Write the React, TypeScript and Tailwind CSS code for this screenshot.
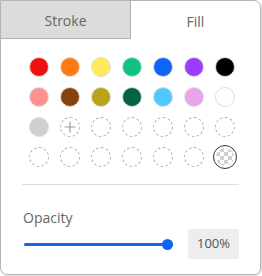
import React from 'react';

const row1 = ['#ee1111', '#ff7b0f', '#ffea5c', '#0fc27f', '#0f64f5', '#9b3cff', '#000000'];
const row2 = ['#ff9191', '#87420c', '#b9a318', '#036443', '#4fc7ff', '#e9a5ea', '#ffffff'];

function Swatch({ color }: { color: string }) {
  return (
    <div
      className="w-5 h-5 rounded-full border border-[#dedede]"
      style={{ backgroundColor: color }}
    />
  );
}

function Empty() {
  return <div className="w-5 h-5 rounded-full border border-dashed border-[#aaaaaa]" />;
}

function AddSwatch() {
  return (
    <div className="w-5 h-5 rounded-full border border-dashed border-[#aaaaaa] flex items-center justify-center">
      <svg width="12" height="12" viewBox="0 0 12 12">
        <path d="M6 0.5V11.5M0.5 6H11.5" stroke="#999" strokeWidth="1.2" />
      </svg>
    </div>
  );
}

function Transparent() {
  return (
    <div className="w-[24px] h-[24px] -m-[2px] rounded-full border border-[#333] p-[2px]">
      <div
        className="w-full h-full rounded-full"
        style={{
          backgroundColor: '#ffffff',
          backgroundImage:
            'linear-gradient(45deg,#d0d0d0 25%,transparent 25%,transparent 75%,#d0d0d0 75%),linear-gradient(45deg,#d0d0d0 25%,transparent 25%,transparent 75%,#d0d0d0 75%)',
          backgroundSize: '8px 8px',
          backgroundPosition: '0 0,4px 4px',
        }}
      />
    </div>
  );
}

export default function App() {
  return (
    <div className="w-[262px] h-[276px] bg-white font-['Open_Sans',sans-serif]">
      <div className="w-[261px] h-[275px] border border-[#b5b5b5] rounded-tr-[7px] rounded-b-[7px] shadow-[1px_1px_1px_rgba(0,0,0,0.15)] overflow-hidden flex flex-col">
        <div className="flex h-[38px] shrink-0">
          <div className="w-[130px] pt-[2px] bg-[#dcdcdd] border-r border-b border-[#b0b0b0] flex items-center justify-center text-[14px] text-[#666]">
            Stroke
          </div>
          <div className="flex-1 pt-[2px] flex items-center justify-center text-[14px] text-[#666]">
            Fill
          </div>
        </div>
        <div className="px-[22px]">
          <div className="pt-[18px] pl-px w-[217px] grid grid-cols-7 gap-y-[10px] justify-items-center justify-between">
            {row1.map((c) => (
              <Swatch key={c} color={c} />
            ))}
            {row2.map((c) => (
              <Swatch key={c} color={c} />
            ))}
            <Swatch color="#cfcfcf" />
            <AddSwatch />
            {Array.from({ length: 11 }).map((_, i) => (
              <Empty key={i} />
            ))}
            <Transparent />
          </div>
          <div className="mt-[17px] h-px bg-[#dddddd] -mx-px" />
          <div className="mt-[23px] text-[14px] leading-5 text-[#666]">Opacity</div>
          <div className="mt-[1px] flex items-center justify-between">
            <div className="relative w-[149px] ml-px h-[11px] flex items-center">
              <div className="w-full h-[3px] rounded-full bg-[#1166f0]" />
              <div className="absolute right-0 w-[11px] h-[11px] rounded-full bg-[#1166f0]" />
            </div>
            <div className="w-[51px] h-[30px] mr-[-1px] rounded-[2px] bg-[#ededed] flex items-center justify-center text-[13px] text-[#555]">
              100%
            </div>
          </div>
        </div>
      </div>
    </div>
  );
}
